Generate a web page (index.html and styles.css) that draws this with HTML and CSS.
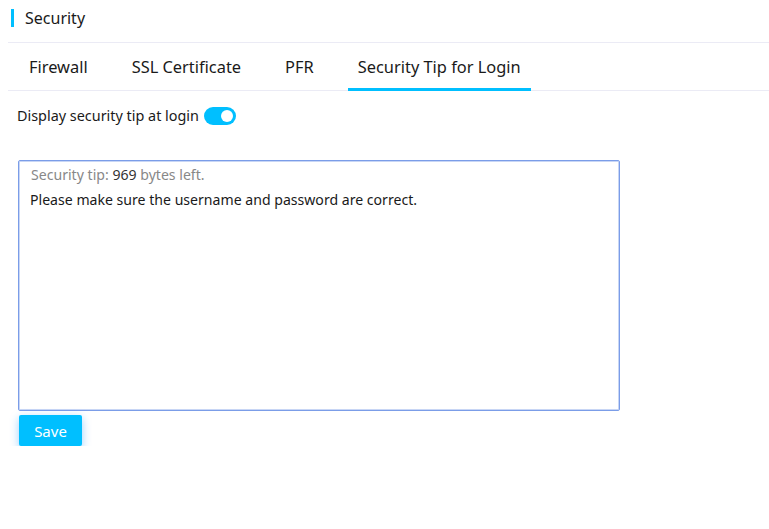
FILE: index.html
```html
<!DOCTYPE html>
<html lang="en">
<head>
    <meta charset="UTF-8">
    <title>Security</title>
    <link rel="stylesheet" href="styles.css">
</head>
<body>
    <div class="page">
        <div class="page-title">Security</div>
        <ul class="tabs">
            <li>Firewall</li>
            <li>SSL Certificate</li>
            <li>PFR</li>
            <li class="active">Security Tip for Login</li>
        </ul>
        <div class="content">
            <div class="switch-row">
                <span>Display security tip at login</span>
                <span class="switch"><span class="knob"></span></span>
            </div>
            <div class="tip-box">
                <div class="tip-count">Security tip: <b>969</b> bytes left.</div>
                <div class="tip-text">Please make sure the username and password are correct.</div>
            </div>
            <button class="btn-save">Save</button>
        </div>
    </div>
</body>
</html>
```

FILE: styles.css
```css
body {
    margin: 0;
    font-family: "Noto Sans", "Open Sans", sans-serif;
    color: #1a1a1a;
    background-color: #fff;
}

.page {
    padding-left: 8px;
}

.page-title {
    height: 43px;
    border-bottom: 1px solid #ebebf5;
    display: flex;
    align-items: center;
    font-size: 16px;
    padding-left: 3px;
    padding-bottom: 7px;
    box-sizing: border-box;
}

.page-title::before {
    content: "";
    width: 3px;
    height: 18px;
    background-color: #00bfff;
    margin-right: 11px;
}

.tabs {
    list-style: none;
    margin: 0;
    padding: 0 0 0 11px;
    display: flex;
    gap: 24px;
    border-bottom: 1px solid #ebebf5;
}

.tabs li {
    font-size: 16.4px;
    padding: 0 10px;
    height: 47px;
    line-height: 48px;
    box-sizing: border-box;
}

.tabs li.active {
    border-bottom: 3px solid #00bfff;
    margin-bottom: -1px;
    height: 48px;
}

.content {
    padding: 0 0 0 9px;
}

.switch-row {
    display: flex;
    align-items: center;
    gap: 5px;
    font-size: 14.4px;
    height: 47px;
    padding-top: 2px;
    box-sizing: border-box;
}

.switch {
    width: 32px;
    height: 18px;
    border-radius: 9px;
    background-color: #00bfff;
    position: relative;
}

.switch .knob {
    position: absolute;
    top: 3px;
    right: 3px;
    width: 12px;
    height: 12px;
    border-radius: 50%;
    background-color: #fff;
}

.tip-box {
    margin-top: 22px;
    margin-left: 1px;
    width: 602px;
    height: 251px;
    border: 1px solid #7b9de8;
    border-radius: 2px;
    box-shadow: inset 0 0 0 1px #c8d6f5;
    box-sizing: border-box;
    padding: 4px 11px;
    font-size: 14.1px;
}

.tip-count {
    color: #888;
    padding-left: 1px;
}

.tip-count b {
    font-weight: normal;
    color: #333;
}

.tip-text {
    margin-top: 6px;
}

.btn-save {
    margin-top: 4px;
    margin-left: 2px;
    width: 63px;
    height: 31px;
    border: none;
    border-radius: 2px;
    background-color: #00bfff;
    color: #fff;
    font-family: inherit;
    font-size: 15px;
    box-shadow: 0 3px 10px rgba(0, 140, 255, 0.4);
}
```
